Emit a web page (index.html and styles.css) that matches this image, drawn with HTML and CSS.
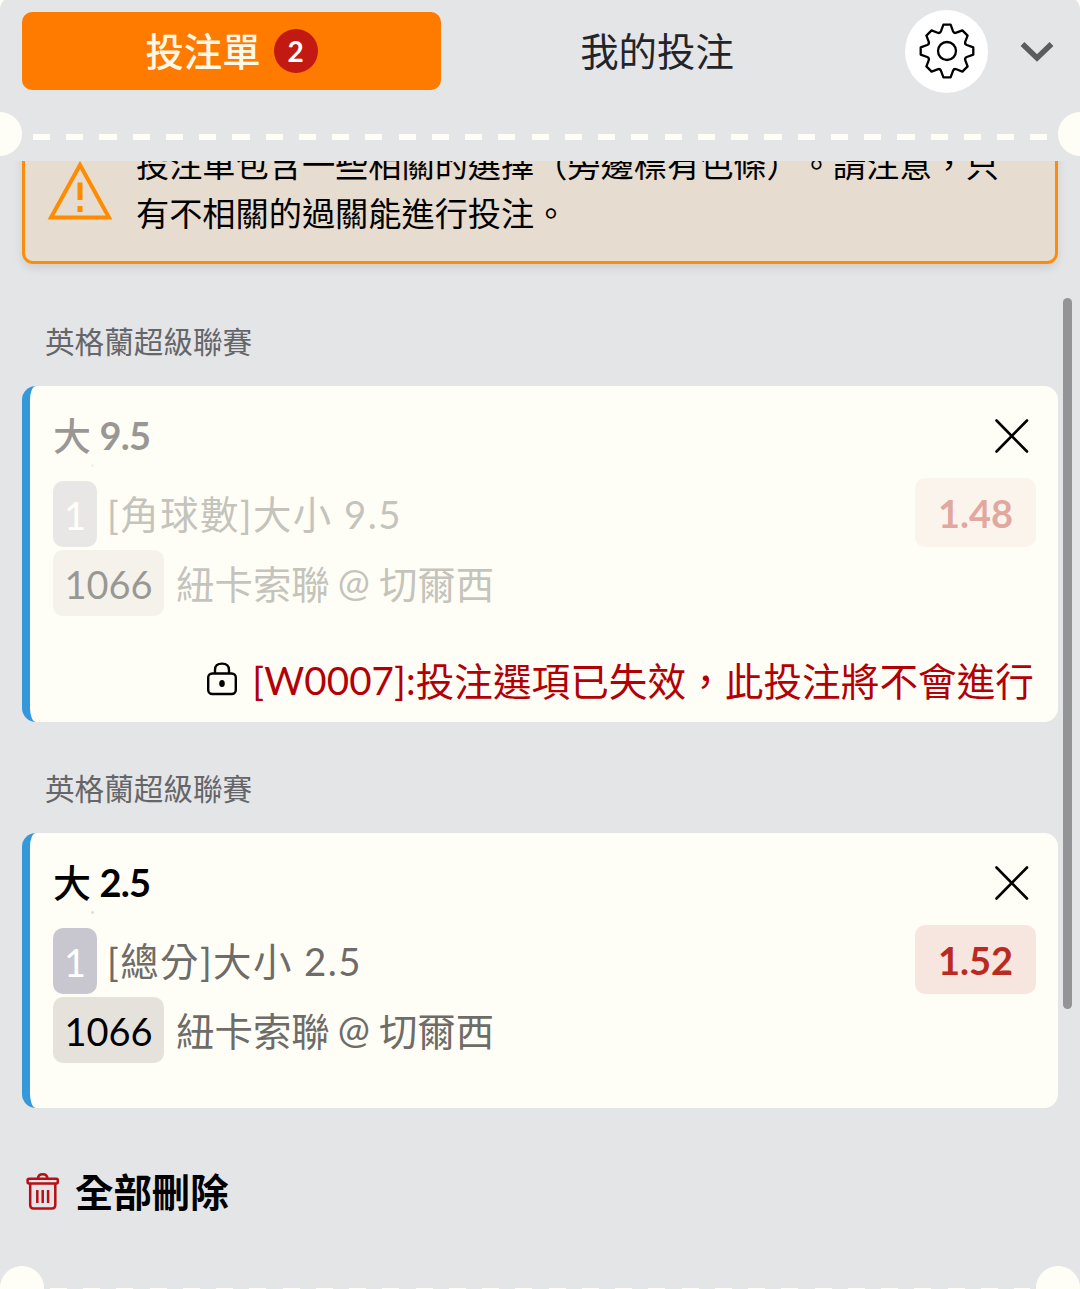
FILE: index.html
```html
<!DOCTYPE html>
<html lang="zh-Hant">
    <head>
        <meta charset="UTF-8">
        <title>投注單</title>
        <link rel="stylesheet" href="styles.css">
    </head>
    <body>
        <div class="betslip">
            <!-- タブ -->
            <div class="header">
                <div class="tab active"><span class="label">投注單</span><span class="badge">2</span></div>
                <div class="tab"><span class="label">我的投注</span></div>
                <div class="setting">
                    <svg width="58" height="58" viewBox="-29 -29 58 58" fill="none" stroke="#000" stroke-width="2.3" stroke-linejoin="round">
                        <circle r="9"/>
                        <path d="M-3.6 -26.3H3.6L6 -19.8Q7 -17.4 9.4 -18.3L15.4 -20.6L20.6 -15.4L18.3 -9.4Q17.4 -7 19.8 -6L26.3 -3.6V3.6L19.8 6Q17.4 7 18.3 9.4L20.6 15.4L15.4 20.6L9.4 18.3Q7 17.4 6 19.8L3.6 26.3H-3.6L-6 19.8Q-7 17.4 -9.4 18.3L-15.4 20.6L-20.6 15.4L-18.3 9.4Q-17.4 7 -19.8 6L-26.3 3.6V-3.6L-19.8 -6Q-17.4 -7 -18.3 -9.4L-20.6 -15.4L-15.4 -20.6L-9.4 -18.3Q-7 -17.4 -6 -19.8Z"/>
                    </svg>
                </div>
                <svg class="arrow" width="34" height="22" viewBox="0 0 34 22" fill="none" stroke="#5a5c5e" stroke-width="5.5"><path d="M2.5 4L17 18L31.5 4"/></svg>
            </div>
            <div class="cut">
                <span class="hole"></span><span class="dash"></span><span class="hole"></span>
            </div>

            <!-- スクロール部分 -->
            <div class="list">
                <div class="alert">
                    <svg width="66" height="60" viewBox="0 0 66 60" fill="none" stroke="#ff8b00" stroke-width="4">
                        <path d="M33 4L62 56.5H4Z"/>
                        <path d="M33 21.5V39M33 45V51" stroke-width="5"/>
                    </svg>
                    <p>投注單包含一些相關的選擇（旁邊標有色條）。請注意，只<br>有不相關的過關能進行投注。</p>
                </div>

                <div class="league">英格蘭超級聯賽</div>
                <div class="card closed">
                    <div class="title">
                        <span class="name fade">大 <b>9.5</b></span>
                        <svg width="36" height="36" viewBox="0 0 36 36" stroke="#000" stroke-width="2.6" stroke-linecap="round"><path d="M2.5 2.5L33 33.5M33 2.5L2.5 33.5"/></svg>
                    </div>
                    <div class="detail fade">
                        <div>
                            <p class="row wide"><span class="num">1</span><span class="text">[角球數]大小 9.5</span></p>
                            <p class="row"><span class="code">1066</span><span class="text">紐卡索聯<span class="at">@</span>切爾西</span></p>
                        </div>
                        <div class="odds">1.48</div>
                    </div>
                    <div class="error">
                        <svg width="30" height="34" viewBox="0 0 30 34" fill="none" stroke="#000" stroke-width="2.4">
                            <rect x="1.2" y="11.5" width="27.6" height="20.5" rx="4"/>
                            <path d="M8 11.5V8Q8 1.6 15 1.6Q22 1.6 22 8V11.5"/>
                            <ellipse cx="15" cy="21.5" rx="1.6" ry="2.3" fill="#000"/>
                        </svg>
                        <span><span class="errno">[W0007]:</span>投注選項已失效，此投注將不會進行</span>
                    </div>
                </div>

                <div class="league">英格蘭超級聯賽</div>
                <div class="card">
                    <div class="title">
                        <span class="name">大 <b>2.5</b></span>
                        <svg width="36" height="36" viewBox="0 0 36 36" stroke="#000" stroke-width="2.6" stroke-linecap="round"><path d="M2.5 2.5L33 33.5M33 2.5L2.5 33.5"/></svg>
                    </div>
                    <div class="detail">
                        <div>
                            <p class="row wide"><span class="num">1</span><span class="text">[總分]大小 2.5</span></p>
                            <p class="row"><span class="code">1066</span><span class="text">紐卡索聯<span class="at">@</span>切爾西</span></p>
                        </div>
                        <div class="odds">1.52</div>
                    </div>
                </div>

                <!-- 全部刪除 -->
                <div class="clear">
                    <svg width="34" height="38" viewBox="0 0 34 38" fill="none" stroke="#b80f14" stroke-width="2.5">
                        <rect x="1.6" y="5.8" width="30.2" height="4.6" rx="1.5"/>
                        <path d="M12 5.8Q12 1.3 16.7 1.3Q21.4 1.3 21.4 5.8"/>
                        <path d="M4.2 10.5V32Q4.2 35.5 7.5 35.5H26Q29.3 35.5 29.3 32V10.5"/>
                        <path d="M11.3 17V30M16.7 17V30M22.1 17V30"/>
                    </svg>
                    <span>全部刪除</span>
                </div>
            </div>
            <div class="cut bottom">
                <span class="hole"></span><span class="dash"></span><span class="hole"></span>
            </div>
            <div class="scrollbar"></div>
        </div>
    </body>
</html>
```

FILE: styles.css
```css
*{box-sizing:border-box;}
body{margin:0;overflow:hidden;background-color:#fffef6;font-family:Lato,"Noto Sans CJK TC",sans-serif;color:#000;text-spacing-trim:space-all;}
p{margin:0;}
svg{display:block;flex:none;}
.betslip{position:relative;display:flex;flex-direction:column;height:1293px;margin-top:-4px;padding-top:4px;border-radius:14px 14px 0 0;background-color:#e4e5e7;overflow:hidden;}

/* タブ */
.header{display:flex;align-items:center;height:102px;padding:0 26px 0 22px;flex:none;}
.tab{display:flex;align-items:center;justify-content:center;width:432px;height:78px;font-size:38.4px;color:#222429;}
.tab.active{width:419px;border-radius:10px;background-color:#ff7b00;color:#fff8e8;font-weight:500;}
.label{padding-bottom:4px;}
.badge{display:flex;align-items:center;justify-content:center;width:44px;height:44px;margin-left:13px;border-radius:50%;background-color:#c21a12;color:#fff;font-size:28px;font-weight:bold;}
.setting{display:flex;align-items:center;justify-content:center;width:83px;height:83px;margin-left:32px;border-radius:50%;background-color:#fff;}
.arrow{margin-left:auto;}

/* 切り取り線 */
.cut{display:flex;align-items:center;justify-content:space-between;height:59px;margin:0 -22px;padding-top:5px;flex:none;}
.hole{width:44px;height:44px;border-radius:50%;background-color:#fffef6;}
.dash{width:1014px;height:6px;margin-top:5px;background:repeating-linear-gradient(90deg,#fffef6 0,#fffef6 17px,transparent 17px,transparent 33.25px);}
.cut.bottom{align-items:flex-start;height:23px;margin:0;padding:0;}
.cut.bottom .dash{width:980px;margin-top:22px;}

.list{flex:1;padding:0 22px;overflow:hidden;}

/* お知らせ */
.alert{display:flex;height:150px;margin-top:-47px;padding:22px 20px 0 22px;border:3px solid #fb8d0c;border-radius:11px;background-color:#e6dcd0;box-shadow:0 4px 10px rgba(0,0,0,.1);}
.alert svg{margin-top:22px;}
.alert p{margin-top:1px;margin-left:23px;font-size:33.2px;line-height:49px;white-space:nowrap;}

.league{margin:56px 0 22px 23px;font-size:29.6px;line-height:44px;color:#646669;}
.card + .league{margin-top:45px;}

/* カード */
.card{height:275px;padding:20px 22px 0 23px;border-left:8px solid #3598db;border-radius:14px;background-color:#fffef6;}
.card.closed{height:336px;}
.title{display:flex;align-items:center;justify-content:space-between;height:60px;padding-right:6px;font-size:38px;font-weight:500;}
.name{padding-bottom:5px;}
.title b{margin-left:-1px;letter-spacing:-.8px;}
.fade{opacity:.4;}
.detail{position:relative;display:flex;justify-content:space-between;padding-top:12px;}
/* タイトル下の点 */
.detail::before{content:"";position:absolute;top:-2px;left:38px;width:3px;height:3px;border-radius:50%;background-color:#dcdce2;}
.row{display:flex;align-items:center;height:66px;margin-top:3px;font-size:38.4px;color:#6d6c68;white-space:pre;}
.text{padding-bottom:3px;}
.wide .text{margin-left:-2px;padding-bottom:5px;letter-spacing:1.45px;}
.at{position:relative;top:-3px;margin:0 9px 0 8px;}
.num,.code{height:66px;margin-right:12px;padding:0 11.5px;border-radius:10px;background-color:#e5e2dc;color:#000;font-size:38px;line-height:68px;}
.num{padding:0 11px;background-color:#c8c6ce;color:#fff;}
.odds{width:121px;height:69px;border-radius:10px;background-color:#f6e6df;color:#b92a20;font-size:38px;font-weight:bold;line-height:70px;text-align:center;}
.error{display:flex;align-items:center;justify-content:flex-end;height:66px;margin:30px 2px 0 0;color:#b30006;font-size:38.6px;white-space:nowrap;}
.error svg{margin-right:15px;}
.errno{position:relative;top:-1px;}
.error > span{letter-spacing:.07px;}

.clear{display:flex;align-items:center;height:60px;margin:54px 0 0 4px;gap:15px;font-size:38.4px;font-weight:bold;}
.clear span{padding-bottom:5px;}

/* スクロールバー */
.scrollbar{position:absolute;top:302px;right:8px;width:9px;height:711px;border-radius:5px;background-color:#949497;}
```
